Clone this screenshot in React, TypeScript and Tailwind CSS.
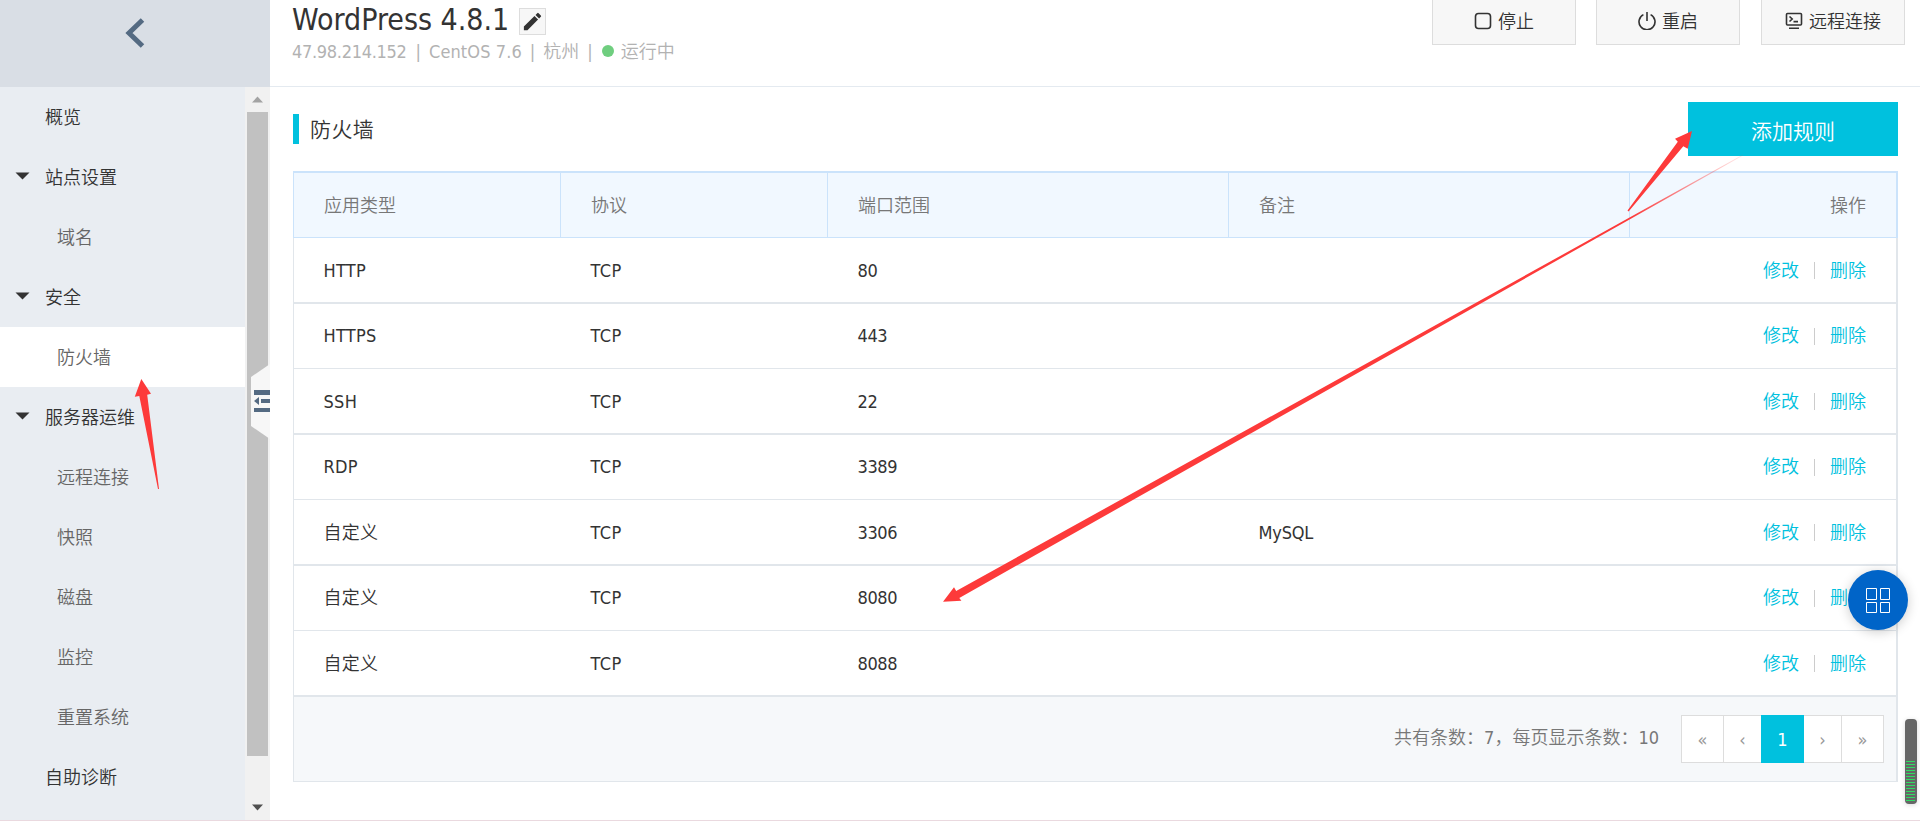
//ICONS
import { MdEdit } from 'react-icons/md';

const menu = [
    { label: '概览', type: 'top' },
    { label: '站点设置', type: 'group' },
    { label: '域名', type: 'sub' },
    { label: '安全', type: 'group' },
    { label: '防火墙', type: 'sub', active: true },
    { label: '服务器运维', type: 'group' },
    { label: '远程连接', type: 'sub' },
    { label: '快照', type: 'sub' },
    { label: '磁盘', type: 'sub' },
    { label: '监控', type: 'sub' },
    { label: '重置系统', type: 'sub' },
    { label: '自助诊断', type: 'top' },
];

const rules = [
    { app: 'HTTP', protocol: 'TCP', port: '80', remark: '' },
    { app: 'HTTPS', protocol: 'TCP', port: '443', remark: '' },
    { app: 'SSH', protocol: 'TCP', port: '22', remark: '' },
    { app: 'RDP', protocol: 'TCP', port: '3389', remark: '' },
    { app: '自定义', protocol: 'TCP', port: '3306', remark: 'MySQL' },
    { app: '自定义', protocol: 'TCP', port: '8080', remark: '' },
    { app: '自定义', protocol: 'TCP', port: '8088', remark: '' },
];

function Sidebar() {
    return (
        <aside className="relative flex flex-col w-[270px] shrink-0">
            <div className="h-[87px] shrink-0 bg-[#d9dee5]">
                <svg className="ml-[124px] mt-[16px]" width="24" height="34" viewBox="0 0 24 34" fill="none" stroke="#546a82" strokeWidth="5">
                    <path d="M18.5 4 L5 17 L18.5 30" />
                </svg>
            </div>
            <div className="flex flex-1">
                <nav className="w-[245px] bg-[#e9edf2]">
                    {
                        menu.map((item) => (
                            <div key={item.label} className={`flex items-center h-[60px] pt-px ${item.active ? 'bg-white' : ''}`}>
                                <div className={item.type === 'sub' ? 'w-[57px]' : 'w-[45px]'}>
                                    {item.type === 'group' && <svg className="ml-[15px] -mt-[3px]" width="15" height="8" fill="#333"><path d="M0.5 0.5 H14.5 L7.5 7.5 Z" /></svg>}
                                </div>
                                <span className={item.type === 'sub' ? 'text-[#666]' : 'text-[#333]'}>{item.label}</span>
                            </div>
                        ))
                    }
                </nav>
                <div className="flex flex-col items-center w-[25px] bg-[#f1f1f1]">
                    <svg className="my-[9px] shrink-0" width="11" height="7" fill="#a3a3a3"><path d="M0 6.5 L5.5 0.5 L11 6.5 Z" /></svg>
                    <div className="w-[21px] h-[644px] bg-[#c1c1c1]" />
                    <svg className="mt-[48px] shrink-0" width="11" height="7" fill="#505050"><path d="M0 0.5 H11 L5.5 6.5 Z" /></svg>
                </div>
            </div>
            {/* collapse handle over the scrollbar */}
            <svg className="absolute left-[251px] top-[364px]" width="19" height="75">
                <path d="M19 0 L0 13 V62 L19 75 Z" fill="#f7f7f7" />
                <g fill="#546a82">
                    <rect x="3" y="26" width="16" height="5" />
                    <rect x="10" y="35" width="9" height="4" />
                    <rect x="3" y="44" width="16" height="4" />
                    <path d="M3 37 L8 33 V41 Z" />
                </g>
            </svg>
        </aside>
    )
}

function TopButton({ text, children }: { text: string, children: any }) {
    return (
        <button className="flex items-center justify-center w-[144px] h-[45px] pb-px bg-[#f7f7f7] border border-t-0 border-[#ddd] text-[#333]">
            <svg className="mr-[6px] -mt-[2px]" width="18" height="18" viewBox="0 0 18 18" fill="none" stroke="#333" strokeWidth="1.6"> {children} </svg>
            <span>{text}</span>
        </button>
    )
}

function Header() {
    return (
        <header className="flex justify-between h-[87px] shrink-0 pl-[23px] pr-[15px] border-b border-[#e4eaf0]">
            <div>
                <div className="flex items-start h-[35px]">
                    <h1 className="-ml-px text-[30px] leading-[40px] text-[#333]">WordPress 4.8.1</h1>
                    <button className="flex items-center justify-center w-[27px] h-[27px] mt-[8px] ml-[10px] bg-[#f7f7f7] border border-[#ddd]"> <MdEdit className="w-[23px] h-[23px] text-[#333]" /> </button>
                </div>
                <div className="flex items-center h-[32px] -ml-px text-[#b2b2b2] whitespace-pre">
                    <span className="tracking-[-0.3px]">47.98.214.152</span>
                    <span className="ml-[9px] mr-[8px]">|</span>
                    <span className="tracking-[0.1px]">CentOS 7.6</span>
                    <span className="ml-[8px] mr-[8px]">|</span>
                    <span>杭州</span>
                    <span className="ml-[8px] mr-[9px]">|</span>
                    <span className="w-[12px] h-[12px] rounded-full bg-[#6fce7f]" />
                    <span className="ml-[7px]">运行中</span>
                </div>
            </div>
            <div className="flex">
                <TopButton text="停止"> <rect x="1.5" y="1.5" width="15" height="15" rx="3" /> </TopButton>
                <div className="ml-[20px] mr-[21px]">
                    <TopButton text="重启"> <path d="M5.4 2.6 A8 8 0 1 0 12.6 2.6 M9 0 V9" /> </TopButton>
                </div>
                <TopButton text="远程连接"> <rect x="1.5" y="1.5" width="15" height="11.5" rx="1" /> <path d="M4.5 4.5 L7.2 7 L4.5 9.5 M8.5 9.6 H13 M4 16.2 H14" /> </TopButton>
            </div>
        </header>
    )
}

const cols = 'grid grid-cols-[267px_267px_401px_401px_266px]';

function RuleTable() {
    return (
        <div className="w-[1605px] mt-[15px]">
            <div className={`${cols} h-[67px] bg-[#f1f8ff] border-t-2 border-l border-r-2 border-b border-[#cbe3fb] text-[#777]`}>
                {
                    ['应用类型', '协议', '端口范围', '备注'].map((name) => (
                        <div key={name} className="flex items-center pl-[30px] border-r border-[#cbe3fb]">{name}</div>
                    ))
                }
                <div className="flex items-center justify-end pr-[30px]">操作</div>
            </div>
            {
                rules.map((rule, i) => (
                    <div key={i} className={`${cols} items-center border-l border-r-2 border-[#e1e6eb] text-[#333] ${i % 2 ? 'h-[65px] border-b pb-px' : 'h-[66px] border-b-2'}`}>
                        <div className="pl-[29.5px] tracking-[0.3px]">{rule.app}</div>
                        <div className="pl-[29.5px] tracking-[0.4px]">{rule.protocol}</div>
                        <div className="pl-[29.5px] tracking-[-0.4px]">{rule.port}</div>
                        <div className="pl-[29.5px] tracking-[-0.2px]">{rule.remark}</div>
                        <div className="flex items-center justify-end pr-[30px] text-[#00c1de]">
                            <a>修改</a>
                            <span className="w-px h-[17px] mt-px mx-[15px] bg-[#ccc]" />
                            <a>删除</a>
                        </div>
                    </div>
                ))
            }
            <div className="flex items-start justify-end h-[85px] pt-[18px] pr-[12px] bg-[#f6f8fa] border-l border-r-2 border-b border-[#e1e6eb]">
                <span className="mr-[22px] mt-[9px] text-[#777]">共有条数：7，每页显示条数：10</span>
                <div className="flex h-[48px] bg-white border border-[#ddd] text-[#999]">
                    <div className="flex items-center justify-center w-[42px] border-r border-[#ddd]">«</div>
                    <div className="flex items-center justify-center w-[37px]">‹</div>
                    <div className="flex items-center justify-center w-[43px] -my-px bg-[#00c1de] text-white">1</div>
                    <div className="flex items-center justify-center w-[38px] border-r border-[#ddd]">›</div>
                    <div className="flex items-center justify-center w-[41px]">»</div>
                </div>
            </div>
        </div>
    )
}

function Arrows() {
    return (
        <svg className="absolute left-0 top-0 pointer-events-none" width="1920" height="821" fill="#fd3a3a">
            <defs>
                <linearGradient id="fade" gradientUnits="userSpaceOnUse" x1="1743" y1="155" x2="1630" y2="218">
                    <stop offset="0" stopColor="#fd3a3a" stopOpacity="0.1" />
                    <stop offset="1" stopColor="#fd3a3a" />
                </linearGradient>
            </defs>
            <path d="M141.3 379 L151 393.8 L147.2 394.8 L159 489 L158 489 L139.3 396 L134.8 396.8 Z" />
            <path d="M1692 131 L1687.7 148.7 L1683.3 146.3 L1628.6 211.5 L1627.5 210.5 L1677.8 141.8 L1675 138.7 Z" />
            <path d="M943 601.8 L954 587.3 L956.2 591 L1743 154.6 L1743 155.4 L959.3 598 L961.4 600.8 Z" fill="url(#fade)" />
        </svg>
    )
}

function App() {
    return (
        <div className="relative flex flex-col w-[1920px] h-[821px] overflow-hidden bg-white text-[18px] leading-[27px] font-[350] font-['DejaVu_Sans_Condensed','Noto_Sans_CJK_SC',sans-serif]">
            <div className="flex h-[820px]">
                <Sidebar />
                <div className="flex flex-col flex-1">
                    <Header />
                    <main className="pl-[23px] pt-[15px]">
                        <div className="flex items-start w-[1605px] h-[54px]">
                            <span className="w-[6px] h-[30px] mt-[12px] bg-[#00c1de]" />
                            <h2 className="ml-[11px] mt-[13px] text-[21px] leading-[30px] tracking-[0.4px] text-[#333]">防火墙</h2>
                            <button className="w-[210px] h-[54px] pt-[6px] ml-auto bg-[#00c1de] text-white text-[21px]">添加规则</button>
                        </div>
                        <RuleTable />
                    </main>
                </div>
            </div>
            <div className="h-px bg-[#ead9df]" />

            <div className="absolute left-[1848px] top-[570px] flex items-center justify-center w-[60px] h-[60px] rounded-full bg-[#0064c8] shadow-[0_2px_12px_rgba(0,0,0,0.2)]">
                <svg width="26" height="26" fill="none" stroke="#fff">
                    <path d="M1.5 1.5 h10 v11 h-10 Z M15.5 1.5 h9 v11 h-9 Z M1.5 15.5 h10 v10 h-10 Z M15.5 15.5 h9 v10 h-9 Z" />
                </svg>
            </div>

            <div className="absolute left-[1905px] top-[719px] flex flex-col justify-end items-start gap-[2px] w-[12px] h-[85px] pl-px pb-[3px] rounded-[4px] bg-[#666] shadow-[0_1px_5px_rgba(0,0,0,0.15)]">
                {Array.from({ length: 14 }).map((_, i) => <span key={i} className="w-[9px] h-px bg-[#2fdc62]" />)}
            </div>
            <Arrows />
        </div>
    )
}

export default App;
